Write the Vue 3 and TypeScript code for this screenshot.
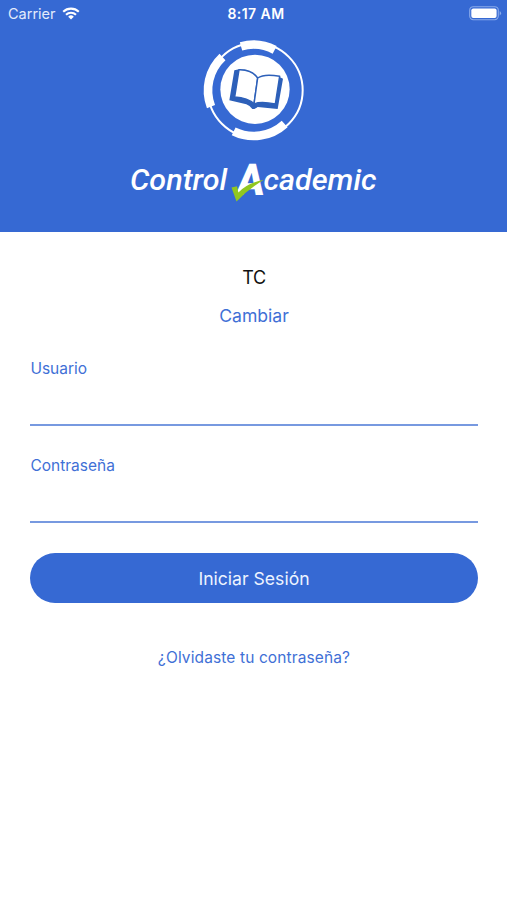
<script setup lang="ts">
import { ref } from 'vue'

interface Field {
  id: string
  label: string
  type: string
}

const fields: Field[] = [
  { id: 'usuario', label: 'Usuario', type: 'text' },
  { id: 'contrasena', label: 'Contraseña', type: 'password' },
]
const values = ref<Record<string, string>>({ usuario: '', contrasena: '' })
</script>

<template>
  <main class="screen">
    <header class="hero">
      <div class="status">
        <div class="carrier">
          <span>Carrier</span>
          <svg class="wifi" viewBox="0 0 18 13" width="18" height="13" fill="none">
            <path d="M1.2 4.7A11.4 11.4 0 0 1 16.8 4.7" stroke="#fff" stroke-width="2.1" />
            <path d="M4 7.7A7.3 7.3 0 0 1 14 7.7" stroke="#fff" stroke-width="2.1" />
            <path d="M9 12.6L6.2 9.7A4 4 0 0 1 11.8 9.7Z" fill="#fff" />
          </svg>
        </div>
        <span class="time">8:17 AM</span>
        <svg class="battery" viewBox="0 0 33 15" width="33" height="15">
          <rect x="0.7" y="0.7" width="28.6" height="13" rx="3.6" fill="none" stroke="#8aabea" stroke-width="1.1" />
          <rect x="2.3" y="2.4" width="25.3" height="9.6" rx="2" fill="#fff" />
          <path d="M30.7 5v4.4q1.4-.8 1.4-2.2t-1.4-2.2z" fill="#8aabea" />
        </svg>
      </div>

      <svg class="emblem" viewBox="0 0 354 345" width="118" height="115" fill="none">
        <circle cx="181" cy="175" r="142" stroke="#fff" stroke-width="6" />
        <g stroke="#fff" stroke-width="26">
          <path d="M138 43A137 137 0 0 1 239 53.500" />
          <path d="M82.500 75A137 137 0 0 0 48 224" />
          <path d="M116 298A137 137 0 0 0 269 276" />
        </g>
        <circle cx="180" cy="172" r="104" fill="#fff" />
        <path d="M118 115L103 205L154 217Q164 221 172 231Q181 231 188 225L248 231L264 140L252 134L180 137L132 112Z" fill="#2d60b9" />
        <g fill="#fff" stroke="#2d60b9" stroke-width="4.500" stroke-linejoin="round">
          <path d="M132 113Q171 112 188 138L177 216Q159 197 119 195Z" />
          <path d="M188 138Q208 124 254 133L241 216Q196 207 177 216Z" />
        </g>
      </svg>

      <svg class="wordmark" viewBox="120 155 270 52" width="270" height="52">
        <g class="word">
          <text x="130" y="190.400" textLength="97" lengthAdjust="spacingAndGlyphs">Control</text>
          <text x="263.500" y="190.400" textLength="113" lengthAdjust="spacingAndGlyphs">cademic</text>
        </g>
        <text class="initial" transform="translate(235.500 194.500) skewX(-6)" textLength="27.500" lengthAdjust="spacingAndGlyphs">A</text>
        <path d="M231.500 187.500L237 186.200L238.400 192.500Q247 183 263.800 179.700Q248 189.500 236.500 201.500Z" fill="#91c71f" />
      </svg>
    </header>

    <form class="form" @submit.prevent>
      <p class="school">TC</p>
      <button class="change" type="button">Cambiar</button>
      <div v-for="field in fields" :key="field.id" class="field">
        <label :for="field.id">{{ field.label }}</label>
        <input :id="field.id" v-model="values[field.id]" :type="field.type" />
      </div>
      <button class="submit" type="submit">Iniciar Sesión</button>
      <a class="forgot" href="#">¿Olvidaste tu contraseña?</a>
    </form>
  </main>
</template>

<style>
body {
  margin: 0;
  background: #fff;
}
</style>

<style scoped>
.screen {
  min-height: 900px;
  background: #fff;
  font-family: Inter, Roboto, sans-serif;
  color: #3f70d6;
}
.hero {
  box-sizing: border-box;
  height: 232px;
  background: #3669d3;
  display: flex;
  flex-direction: column;
  align-items: center;
}
.status {
  box-sizing: border-box;
  width: 100%;
  height: 28px;
  padding: 0 5px 0 8px;
  display: grid;
  grid-template-columns: 1fr auto 1fr;
  align-items: center;
  color: #fff;
  font-size: 14.5px;
  line-height: 28px;
}
.carrier {
  display: flex;
  align-items: center;
  gap: 6px;
  color: #e3ebfb;
}
.wifi {
  display: block;
  margin-top: -1px;
}
.time {
  font-weight: 600;
  font-size: 14px;
  letter-spacing: 0.45px;
  padding-left: 2px;
}
.battery {
  justify-self: end;
  margin-top: -1px;
}
.emblem {
  display: block;
  margin-top: 4px;
}
.wordmark {
  display: block;
  margin: 8px 0 0 3px;
}
.word {
  font: italic 500 29.5px Roboto, sans-serif;
  fill: #fff;
}
.initial {
  font: normal 900 44px Roboto, sans-serif;
  fill: #fff;
}
.form {
  padding: 0 29px 0 30px;
  display: flex;
  flex-direction: column;
  align-items: center;
}
.school {
  margin: 33px 0 0;
  font-size: 18px;
  letter-spacing: -0.3px;
  line-height: 25px;
  color: #111;
}
button {
  border: 0;
  padding: 0;
  font-family: inherit;
}
.change {
  margin: 14px 0 25px;
  background: none;
  color: inherit;
  font-size: 17.6px;
  line-height: 24px;
}
.field {
  box-sizing: border-box;
  width: 100%;
  height: 97px;
  display: flex;
  flex-direction: column;
}
.field label {
  font-size: 15.5px;
  line-height: 24px;
  margin-top: 4px;
  padding-left: 0.4px;
}
.field input {
  box-sizing: border-box;
  width: 100%;
  height: 45px;
  border: 0;
  border-bottom: 2px solid #7799e0;
  border-radius: 0;
  padding: 0;
  background: none;
  outline: none;
  font: inherit;
  color: #111;
}
.submit {
  width: 100%;
  height: 50px;
  border-radius: 25px;
  margin-top: 6px;
  background: #3669d3;
  color: #edf3ff;
  font-size: 17.6px;
}
.forgot {
  margin-top: 43px;
  color: inherit;
  text-decoration: none;
  font-size: 15.5px;
  letter-spacing: 0.12px;
  line-height: 24px;
}
</style>
